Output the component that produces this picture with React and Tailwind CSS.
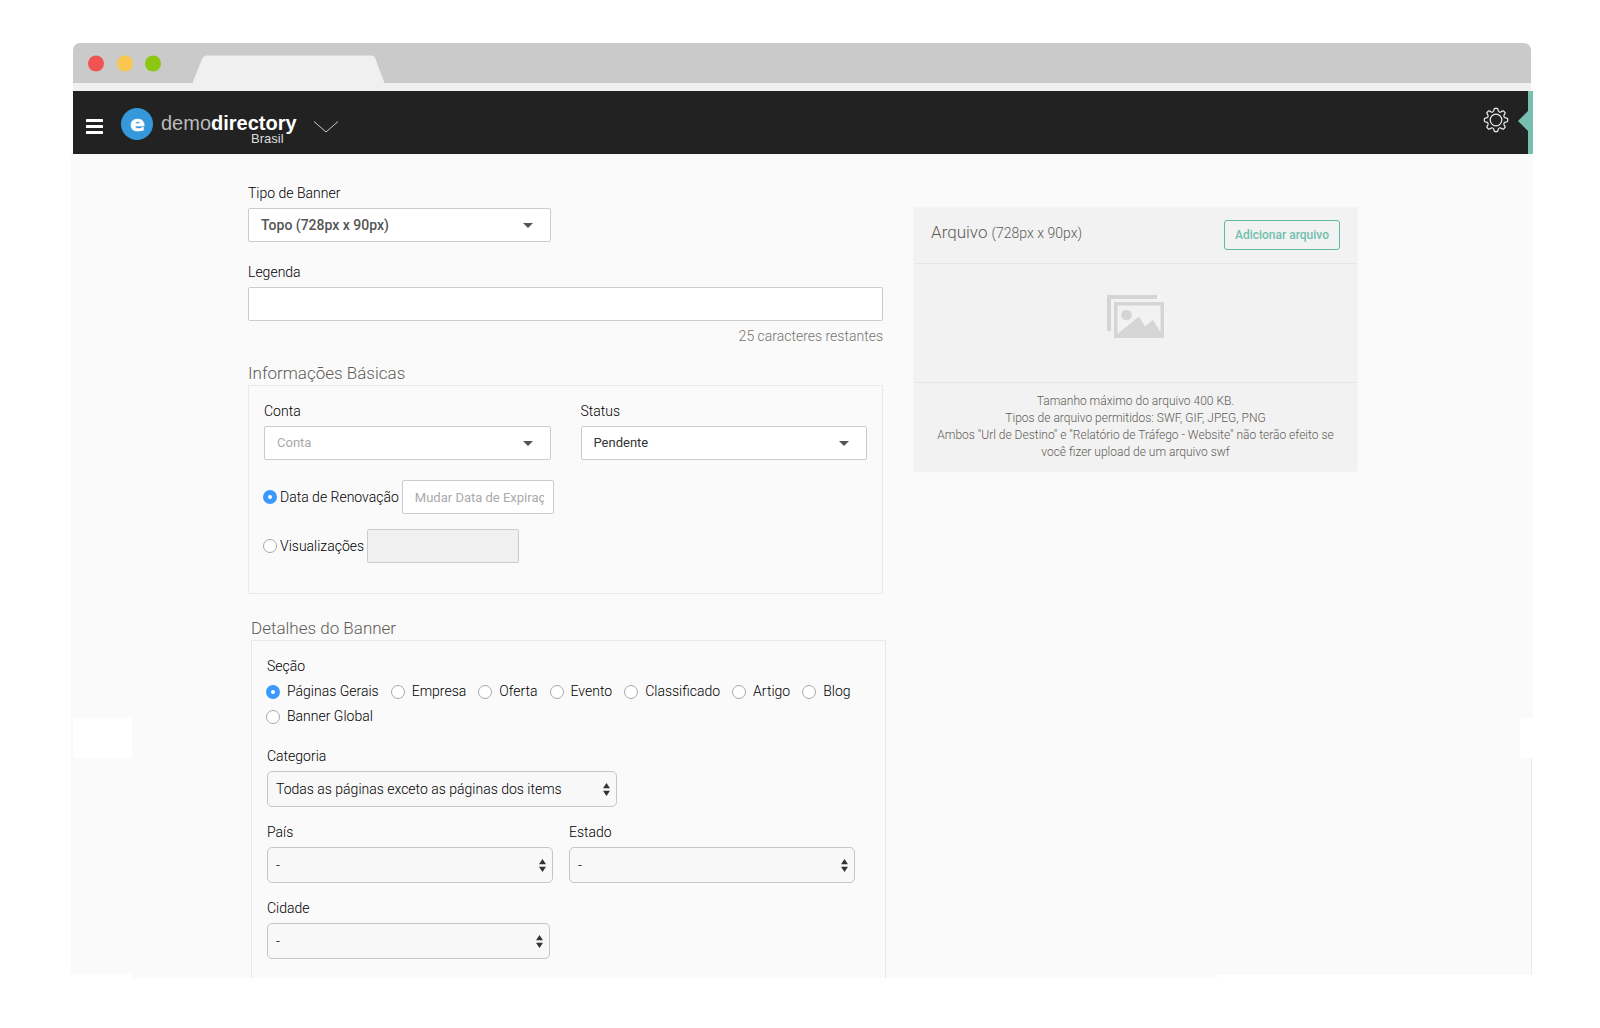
import React, { useState } from 'react';

const sections = ['Páginas Gerais', 'Empresa', 'Oferta', 'Evento', 'Classificado', 'Artigo', 'Blog', 'Banner Global'];

// eight rounded teeth around the centre of a 26px box
const gearPath = () => {
  const at = (deg, r) => {
    const a = (deg * Math.PI) / 180;
    return `${(13 + r * Math.sin(a)).toFixed(2)} ${(13 - r * Math.cos(a)).toFixed(2)}`;
  };
  let d = '';
  for (let i = 0; i < 8; i++) {
    const c = i * 45;
    d += `${i ? 'L' : 'M'}${at(c - 13, 9.6)} L${at(c - 10, 11)} Q${at(c - 8, 11.7)} ${at(c - 5, 11.7)} `;
    d += `L${at(c + 5, 11.7)} Q${at(c + 8, 11.7)} ${at(c + 10, 11)} L${at(c + 13, 9.6)} Q${at(c + 22.5, 7.8)} ${at(c + 32, 9.6)} `;
  }
  return d + 'Z';
};

const radioClass =
  'appearance-none shrink-0 w-[14px] h-[14px] rounded-full border border-[#a9a9a9] bg-white checked:border-[5px] checked:border-[#3b99fc]';

const Select = ({ id, label, className = '', selectClass = 'text-[13px] font-normal text-[#333]', children }) => (
  <div className={className}>
    <label htmlFor={id} className="block mb-[5px]">{label}</label>
    <div className="relative">
      <select
        id={id}
        className={`appearance-none block w-full h-[34px] pl-3 pr-8 bg-white border border-[#ccc] rounded-xs ${selectClass}`}
      >
        {children}
      </select>
      <svg className="absolute right-[18px] top-[15px] pointer-events-none" width="10" height="5" viewBox="0 0 10 5">
        <path d="M0 0h10L5 5z" fill="#555" />
      </svg>
    </div>
  </div>
);

const NativeSelect = ({ id, label, className = '', children }) => (
  <div className={className}>
    <label htmlFor={id} className="block mb-[5px]">{label}</label>
    <div className="relative">
      <select id={id} className="appearance-none block w-full h-9 pl-2 pr-6 bg-[#f8f8f8] border border-[#c6c6c6] rounded-[5px]">
        {children}
      </select>
      <svg className="absolute right-[7px] top-3 pointer-events-none" width="7" height="13" viewBox="0 0 7 13">
        <path d="M3.5 0L7 5.2H0zM3.5 13L0 7.8h7z" fill="#333" />
      </svg>
    </div>
  </div>
);

const WindowBar = () => (
  <div className="mx-[2px]">
    <div className="flex items-end h-10 bg-[#cacaca] rounded-t-[7px]">
      <svg width="312" height="40" viewBox="0 0 312 40">
        <circle cx="23" cy="20.500" r="8" fill="#f15353" />
        <circle cx="52" cy="20.500" r="8" fill="#f9c652" />
        <circle cx="80" cy="20.500" r="8" fill="#8cc714" />
        <path d="M119.500 40L129 16Q130.500 12.500 134 12.500H298Q301.500 12.500 302.500 16L311.500 40z" fill="#f0f0f0" />
      </svg>
    </div>
    <div className="h-2 bg-[#f0f0f0]" />
  </div>
);

const Header = () => (
  <header className="flex items-center h-[63px] ml-[2px] bg-[#222] border-r-[5px] border-[#77c0b0] text-white">
    <button type="button" aria-label="Menu" className="ml-[13px] mt-2">
      <svg className="block" width="17" height="15" viewBox="0 0 17 15" fill="#fff">
        <rect width="17" height="3" rx="0.5" />
        <rect y="6" width="17" height="3" rx="0.5" />
        <rect y="12" width="17" height="3" rx="0.5" />
      </svg>
    </button>
    <a href="#" className="flex items-center ml-[18px] mt-1 font-['Liberation_Sans',sans-serif] font-normal">
      <svg className="-mt-[2px]" width="32" height="32" viewBox="0 0 32 32">
        <circle cx="16" cy="16" r="16" fill="#3598db" />
        <text x="16.500" y="23" textAnchor="middle" fontFamily="DejaVu Sans, sans-serif" fontWeight="700" fontSize="22" fill="#fff" stroke="#fff" strokeWidth="0.500">e</text>
      </svg>
      <span className="ml-2 pt-2">
        <span className="block text-[20px] leading-5"><span className="text-[#bbb]">demo</span><span className="font-bold">directory</span></span>
        <span className="block pr-[13px] text-right text-[13px] leading-3 text-[#ddd]">Brasil</span>
      </span>
    </a>
    <button type="button" aria-label="Sites" className="ml-4 mt-2">
      <svg className="block" width="26" height="12" viewBox="0 0 26 12" fill="none" stroke="#ccc">
        <path d="M1 0.500L13 11L25 0.500" />
      </svg>
    </button>
    <button type="button" aria-label="Configurações" className="ml-auto mr-[9px] -mt-[6px]">
      <svg className="block" width="26" height="26" viewBox="0 0 26 26" fill="none" stroke="#eee" strokeWidth="1.200" strokeLinejoin="round">
        <path d={gearPath()} />
        <circle cx="13" cy="13" r="5.800" />
      </svg>
    </button>
    <svg className="mb-1" width="10" height="20" viewBox="0 0 10 20">
      <path d="M10 0v20L0 10z" fill="#77c0b0" />
    </svg>
  </header>
);

const FilePanel = () => (
  <aside className="self-start mt-6 bg-[#f2f2f2] border border-[#f4f4f4] text-[#5f5c58]">
    <div className="flex items-start justify-between h-[56px] px-[17px] pt-3 border-b border-[#e6e6e6]">
      <h2 className="text-[17px] leading-6">Arquivo <span className="text-[14px]">(728px x 90px)</span></h2>
      <button type="button" className="h-[30px] px-[10px] border border-[#5fb9a4] rounded-[3px] text-[12px] font-medium text-[#72bfad]">
        Adicionar arquivo
      </button>
    </div>
    <div className="flex justify-center h-[119px] pt-[31px] border-b border-[#e6e6e6]">
      <svg width="57" height="43" viewBox="0 0 57 43" fill="#d5d5d5">
        <path d="M0 0h50v4H4v32H0z" />
        <path fillRule="evenodd" d="M7 7h50v36H7zM10.500 10.500v28.500L32 21.500l6 10 8-6.500 7.500 12V10.500z" />
        <circle cx="19.500" cy="20" r="5.300" />
      </svg>
    </div>
    <p className="px-5 py-[10px] text-center text-[12px] leading-[17px]">
      Tamanho máximo do arquivo 400 KB.<br />
      Tipos de arquivo permitidos: SWF, GIF, JPEG, PNG<br />
      Ambos "Url de Destino" e "Relatório de Tráfego - Website" não terão efeito se você fizer upload de um arquivo swf
    </p>
  </aside>
);

const BannerForm = () => {
  const [renewal, setRenewal] = useState('date');
  const [section, setSection] = useState('Páginas Gerais');

  return (
    <form>
      <Select id="type" label="Tipo de Banner" className="w-[303px]" selectClass="text-[14px] font-medium text-[#555]">
        <option>Topo (728px x 90px)</option>
      </Select>

      <label htmlFor="caption" className="block mt-5 mb-[5px]">Legenda</label>
      <input id="caption" type="text" maxLength={25} className="block w-full h-[34px] px-3 bg-white border border-[#ccc] rounded-xs" />
      <p className="mt-[5px] text-right text-[#77746f]">25 caracteres restantes</p>

      <h2 className="mt-[15px] text-[17px] leading-6 text-[#5f5c58]">Informações Básicas</h2>
      <div className="px-[15px] pt-[15px] pb-[30px] border border-[#e8e8e8]">
        <div className="grid grid-cols-2 gap-[30px]">
          <Select id="account" label="Conta" selectClass="text-[13px] font-normal text-[#aaa]">
            <option>Conta</option>
          </Select>
          <Select id="status" label="Status">
            <option>Pendente</option>
          </Select>
        </div>
        <div className="flex items-center mt-5 -ml-px">
          <input id="by-date" type="radio" name="renewal" className={radioClass} checked={renewal === 'date'} onChange={() => setRenewal('date')} />
          <label htmlFor="by-date" className="mx-[3px]">Data de Renovação</label>
          <input
            type="text"
            aria-label="Mudar Data de Expiração"
            placeholder="Mudar Data de Expiração"
            className="w-[152px] h-[34px] pl-3 pr-[9px] bg-white border border-[#ccc] rounded-xs text-[13px] font-normal placeholder:text-[#aaa]"
          />
        </div>
        <div className="flex items-center mt-[15px] -ml-px">
          <input id="by-views" type="radio" name="renewal" className={radioClass} checked={renewal === 'views'} onChange={() => setRenewal('views')} />
          <label htmlFor="by-views" className="mx-[3px]">Visualizações</label>
          <input
            type="text"
            aria-label="Visualizações"
            disabled={renewal !== 'views'}
            className="w-[152px] h-[34px] px-3 bg-white disabled:bg-[#f0f0f0] border border-[#ccc] rounded-xs"
          />
        </div>
      </div>

      <div className="mt-[22px] ml-[3px] -mr-[3px]">
        <h2 className="text-[17px] leading-6 text-[#5f5c58]">Detalhes do Banner</h2>
        <div className="px-[15px] pt-[15px] pb-[19px] border border-b-0 border-[#e8e8e8]">
          <fieldset>
            <legend>Seção</legend>
            <div className="flex flex-wrap gap-x-3 mt-[3px] -ml-px leading-[25px]">
              {sections.map((name) => (
                <label key={name} className="flex items-center gap-[7px]">
                  <input type="radio" name="section" className={radioClass} checked={section === name} onChange={() => setSection(name)} />
                  {name}
                </label>
              ))}
            </div>
          </fieldset>
          <NativeSelect id="category" label="Categoria" className="w-[350px] mt-[17px]">
            <option>Todas as páginas exceto as páginas dos items</option>
          </NativeSelect>
          <div className="flex gap-4 mt-[15px]">
            <NativeSelect id="country" label="País" className="w-[286px]">
              <option>-</option>
            </NativeSelect>
            <NativeSelect id="state" label="Estado" className="w-[286px]">
              <option>-</option>
            </NativeSelect>
          </div>
          <NativeSelect id="city" label="Cidade" className="w-[283px] mt-[15px]">
            <option>-</option>
          </NativeSelect>
        </div>
      </div>
    </form>
  );
};

const App = () => (
  <div className="min-h-screen bg-white pt-[43px] pb-[50px] pl-[71px] pr-[67px] font-[Roboto,sans-serif] text-[14px] leading-5 font-light text-black">
    <WindowBar />
    <Header />
    <main className="relative grid grid-cols-[635fr_445fr] gap-[30px] pt-[29px] pl-[177px] pr-[175px] bg-[#fafafa]">
      <BannerForm />
      <FilePanel />
      <div className="absolute left-[2px] bottom-[220px] w-[59px] h-10 bg-white" />
      <div className="absolute right-0 bottom-[220px] w-[13px] h-10 bg-white" />
      <div className="absolute right-0 bottom-0 w-[2px] h-[220px] bg-white border-l border-[#ebebeb]" />
      <div className="absolute left-0 bottom-0 w-[61px] h-1 bg-white" />
      <div className="absolute right-0 bottom-0 w-[316px] h-[3px] bg-white" />
    </main>
  </div>
);

export default App;
